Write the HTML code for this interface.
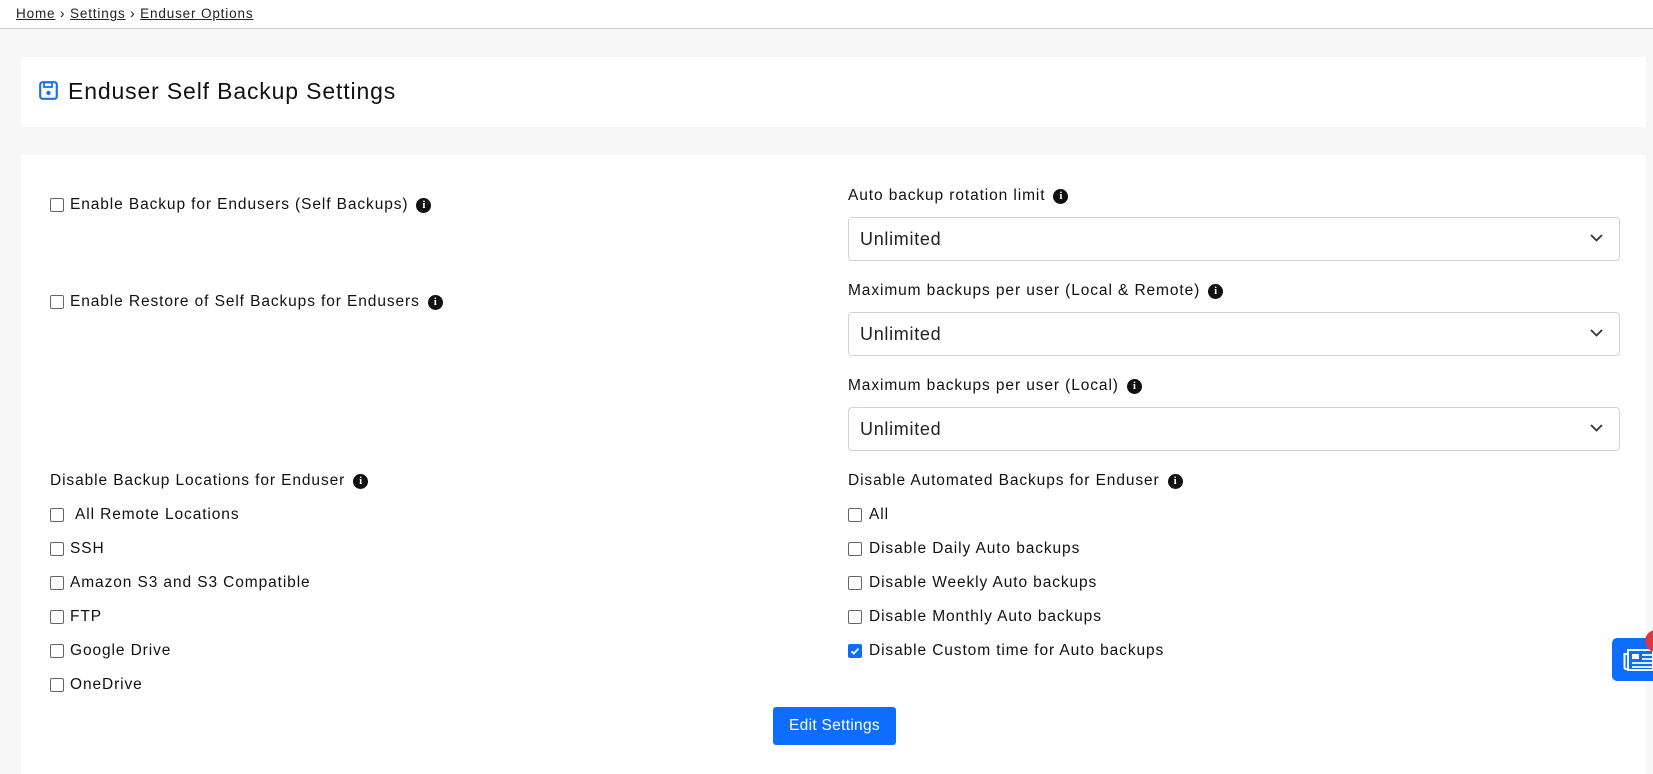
<!DOCTYPE html>
<html><head><meta charset="utf-8"><style>
*{box-sizing:border-box;margin:0;padding:0}
body{width:1653px;height:774px;overflow:hidden;background:#f7f7f7;font-family:"Liberation Sans",sans-serif;color:#111;position:relative}
.bc{position:absolute;left:0;top:0;width:1653px;height:29px;background:#fff;border-bottom:1px solid #ccc;font-size:13.5px;padding:6px 16px;letter-spacing:0.85px}
.bc a{color:#222;text-decoration:underline}
.card{position:absolute;left:21px;width:1625px;background:#fff}
.abs{position:absolute;white-space:nowrap}
.lbl{font-size:15.5px;color:#111;letter-spacing:0.9px}
.cb{position:absolute;width:14px;height:14px;border:1px solid #666;border-radius:2px;background:#fff}
.cb.on{background:#0d6efd;border-color:#0d6efd}
.info{display:inline-block;width:15px;height:15px;border-radius:50%;background:#111;color:#fff;font-size:11px;font-weight:bold;text-align:center;line-height:15px;font-family:"Liberation Serif",serif;vertical-align:1px;margin-left:8px;letter-spacing:0}
.sel{position:absolute;left:848px;width:772px;height:44px;border:1px solid #ced4da;border-radius:4px;font-size:18px;padding:11px 11px;color:#222;letter-spacing:0.7px}
.sel svg{position:absolute;right:16px;top:16px}
</style></head><body>
<div class="bc"><a>Home</a> › <a>Settings</a> › <a>Enduser Options</a></div>
<div class="card" style="top:57px;height:70px"></div>
<svg class="abs" style="left:39px;top:81px" width="19" height="19" viewBox="0 0 19 19"><rect x="1.2" y="1.2" width="16.6" height="16.6" rx="2.5" fill="none" stroke="#1a73e8" stroke-width="2.2"/><rect x="5" y="1.5" width="8" height="4.5" fill="none" stroke="#1a73e8" stroke-width="1.8"/><circle cx="9.5" cy="12" r="2.2" fill="#1a73e8"/></svg>
<div class="abs" style="left:68px;top:78px;font-size:23px;color:#111;letter-spacing:0.85px">Enduser Self Backup Settings</div>
<div class="card" style="top:155px;height:619px"></div>

<div class="cb" style="left:50px;top:198px"></div><div class="abs lbl" style="left:70px;top:196px">Enable Backup for Endusers (Self Backups)<span class="info">i</span></div>
<div class="cb" style="left:50px;top:295px"></div><div class="abs lbl" style="left:70px;top:293px">Enable Restore of Self Backups for Endusers<span class="info">i</span></div>

<div class="abs lbl" style="left:848px;top:187px">Auto backup rotation limit<span class="info">i</span></div>
<div class="sel" style="top:217px">Unlimited<svg width="13" height="8" viewBox="0 0 13 8"><path d="M1 1l5.5 5.5L12 1" fill="none" stroke="#333" stroke-width="1.8"/></svg></div>
<div class="abs lbl" style="left:848px;top:282px">Maximum backups per user (Local &amp; Remote)<span class="info">i</span></div>
<div class="sel" style="top:312px">Unlimited<svg width="13" height="8" viewBox="0 0 13 8"><path d="M1 1l5.5 5.5L12 1" fill="none" stroke="#333" stroke-width="1.8"/></svg></div>
<div class="abs lbl" style="left:848px;top:377px">Maximum backups per user (Local)<span class="info">i</span></div>
<div class="sel" style="top:407px">Unlimited<svg width="13" height="8" viewBox="0 0 13 8"><path d="M1 1l5.5 5.5L12 1" fill="none" stroke="#333" stroke-width="1.8"/></svg></div>

<div class="abs lbl" style="left:50px;top:472px">Disable Backup Locations for Enduser<span class="info">i</span></div>
<div class="cb" style="left:50px;top:508px"></div><div class="abs lbl" style="left:75px;top:506px">All Remote Locations</div>
<div class="cb" style="left:50px;top:542px"></div><div class="abs lbl" style="left:70px;top:540px">SSH</div>
<div class="cb" style="left:50px;top:576px"></div><div class="abs lbl" style="left:70px;top:574px">Amazon S3 and S3 Compatible</div>
<div class="cb" style="left:50px;top:610px"></div><div class="abs lbl" style="left:70px;top:608px">FTP</div>
<div class="cb" style="left:50px;top:644px"></div><div class="abs lbl" style="left:70px;top:642px">Google Drive</div>
<div class="cb" style="left:50px;top:678px"></div><div class="abs lbl" style="left:70px;top:676px">OneDrive</div>

<div class="abs lbl" style="left:848px;top:472px">Disable Automated Backups for Enduser<span class="info">i</span></div>
<div class="cb" style="left:848px;top:508px"></div><div class="abs lbl" style="left:869px;top:506px">All</div>
<div class="cb" style="left:848px;top:542px"></div><div class="abs lbl" style="left:869px;top:540px">Disable Daily Auto backups</div>
<div class="cb" style="left:848px;top:576px"></div><div class="abs lbl" style="left:869px;top:574px">Disable Weekly Auto backups</div>
<div class="cb" style="left:848px;top:610px"></div><div class="abs lbl" style="left:869px;top:608px">Disable Monthly Auto backups</div>
<div class="cb on" style="left:848px;top:644px"><svg width="12" height="12" viewBox="0 0 12 12" style="position:absolute;left:0;top:0"><path d="M2.5 6.3l2.3 2.3 4.7-5" fill="none" stroke="#fff" stroke-width="1.8"/></svg></div><div class="abs lbl" style="left:869px;top:642px">Disable Custom time for Auto backups</div>

<div class="abs" style="left:773px;top:707px;width:123px;height:38px;background:#0d6efd;border-radius:3px;color:#fff;font-size:15.5px;text-align:center;line-height:38px;letter-spacing:0.3px">Edit Settings</div>

<div class="abs" style="left:1612px;top:638px;width:41px;height:43px;background:#0d6efd;border-radius:5px 0 0 5px"></div>
<svg class="abs" style="left:1623px;top:648px" width="30" height="24" viewBox="0 0 30 24"><rect x="5" y="2" width="25" height="20" fill="none" stroke="#fff" stroke-width="2"/><path d="M5 6H1.5v14a2 2 0 0 0 3.5 0" fill="none" stroke="#fff" stroke-width="2"/><rect x="9" y="6" width="7" height="5" fill="#fff"/><path d="M19 7h11M19 11h11M9 15h21M9 19h21" stroke="#fff" stroke-width="1.8"/></svg>
<div class="abs" style="left:1645px;top:630px;width:22px;height:22px;border-radius:50%;background:#dc3545"></div>
</body></html>
